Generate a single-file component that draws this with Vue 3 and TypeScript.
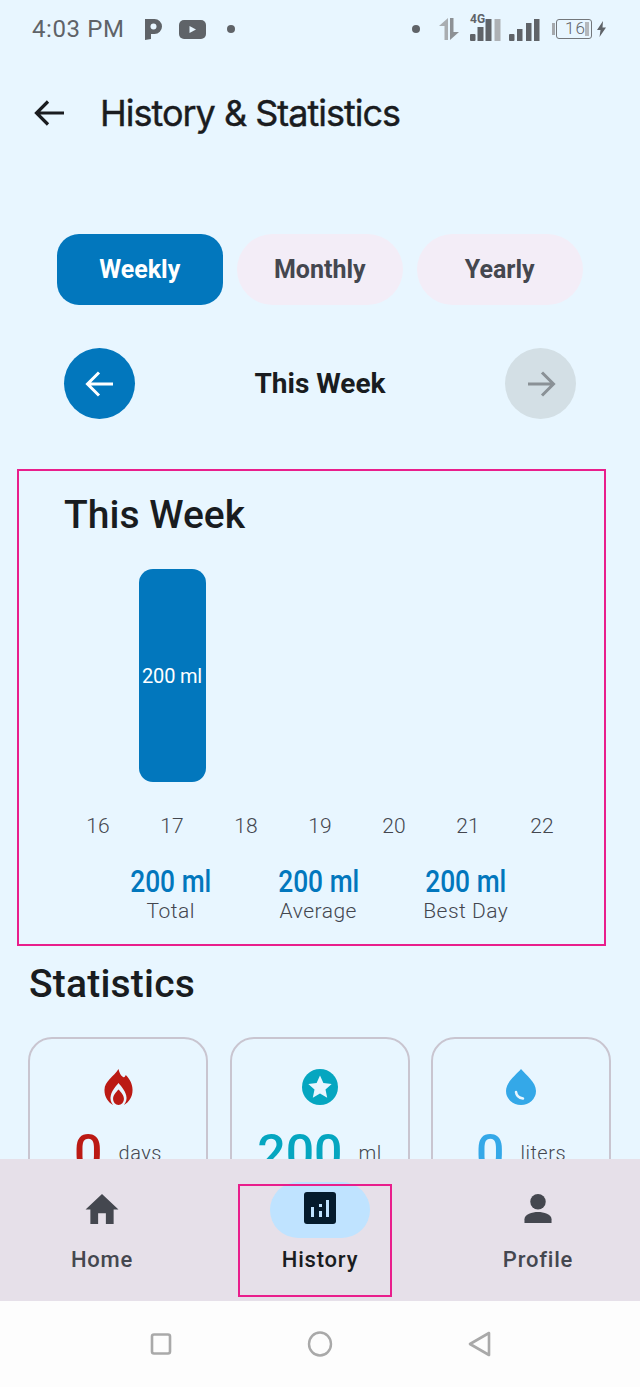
<script setup lang="ts">
const tabs = [
  { label: "Weekly", active: true },
  { label: "Monthly", active: false },
  { label: "Yearly", active: false },
];

const days = [16, 17, 18, 19, 20, 21, 22];

const summary = [
  { value: "200 ml", label: "Total" },
  { value: "200 ml", label: "Average" },
  { value: "200 ml", label: "Best Day" },
];
</script>

<template>
  <div class="phone">
    <div class="screen">
      <div class="status">
        <span class="time">4:03 PM</span>
        <svg class="st-p" width="17" height="21" viewBox="0 0 17 21">
          <path fill="#5f6368" d="M0 0h9.500a7.500 7.500 0 0 1 0 15H6v5l-6 1z" />
          <circle cx="8.500" cy="7.500" r="3" fill="#e8f6ff" />
        </svg>
        <svg class="st-yt" width="27" height="19" viewBox="0 0 27 19">
          <rect width="27" height="19" rx="5" fill="#5f6368" />
          <path fill="#e8f6ff" d="M10.500 6l6.500 3.500-6.500 3.500z" />
        </svg>
        <i class="dot st-dot"></i>
        <span class="grow"></span>
        <i class="dot"></i>
        <svg class="st-arrows" width="22" height="22" viewBox="0 0 22 22">
          <path fill="#a9adb1" d="M10 0v22H6.500V8H1z" />
          <path fill="#8d9195" d="M12 0h3.500v14H21l-9 8z" />
        </svg>
        <div class="st-net">
          <span class="net-4g">4G</span>
          <svg width="31" height="23" viewBox="0 0 31 23">
            <rect x="0" y="16" width="5.500" height="7" rx="1" fill="#5f6368" />
            <rect x="7.500" y="9" width="6" height="14" fill="#5f6368" />
            <rect x="15.500" y="1" width="6" height="22" fill="#5f6368" />
            <rect x="24.500" y="1" width="6" height="22" fill="#adb1b5" />
          </svg>
        </div>
        <svg class="st-bars" width="31" height="23" viewBox="0 0 31 23">
          <rect x="0" y="16" width="5.500" height="7" rx="1" fill="#5f6368" />
          <rect x="8" y="11" width="5.500" height="12" fill="#5f6368" />
          <rect x="17" y="5" width="5.500" height="18" fill="#5f6368" />
          <rect x="25" y="1" width="5.500" height="22" fill="#5f6368" />
        </svg>
        <div class="st-batt">
          <i class="batt-cap"></i>
          <div class="batt-body">16<i class="batt-fill"></i></div>
        </div>
        <svg class="st-bolt" width="9" height="16" viewBox="0 0 9 16">
          <path fill="#5f6368" d="M6 0L0 9h3.500L2.500 16 9 6.500H5.500z" />
        </svg>
      </div>

      <header class="topbar">
        <svg width="32" height="32" viewBox="0 0 32 32" fill="none" stroke="#1a1c20" stroke-width="3.200">
          <path d="M31 16H4M15 4.500L3.500 16 15 27.500" />
        </svg>
        <h1>History &amp; Statistics</h1>
      </header>

      <div class="tabs">
        <button v-for="t in tabs" :key="t.label" class="tab" :class="{ active: t.active }">{{ t.label }}</button>
      </div>

      <div class="period">
        <div class="round prev">
          <svg width="32" height="32" viewBox="0 0 32 32" fill="none" stroke="#fff" stroke-width="3">
            <path d="M29 16H4M15 4.500L3.500 16 15 27.500" />
          </svg>
        </div>
        <span class="period-label">This Week</span>
        <div class="round next">
          <svg width="32" height="32" viewBox="0 0 32 32" fill="none" stroke="#8a9196" stroke-width="3">
            <path d="M3 16H28M17 4.500L28.500 16 17 27.500" />
          </svg>
        </div>
      </div>

      <section class="chart-box">
        <h2>This Week</h2>
        <div class="bars">
          <div v-for="d in days" :key="d" class="bar-col">
            <div v-if="d === 17" class="bar">200 ml</div>
          </div>
        </div>
        <div class="days">
          <span v-for="d in days" :key="d">{{ d }}</span>
        </div>
        <div class="summary">
          <div v-for="s in summary" :key="s.label" class="sum-item">
            <strong>{{ s.value }}</strong>
            <span>{{ s.label }}</span>
          </div>
        </div>
      </section>

      <h2 class="stats-title">Statistics</h2>

      <div class="cards">
        <div class="card">
          <svg width="29" height="34" viewBox="0 0 32 36" preserveAspectRatio="none">
            <path fill="#bb1a14" d="M16 0c1 4 2.500 6.500 5 8 1.500.900 2.500-.500 3-2 4.500 4 7.500 9 7.500 15 0 7-4 12-9.500 15 2.500-3 3.500-6 2.500-9.500C23 21 19.500 18 16 14c-3.500 4-7 7-8.500 12.500-1 3.500 0 6.500 2.500 9.500C4.500 33 .500 28 .500 21 .500 12 11 7.500 16 0z" />
            <path fill="#bb1a14" d="M16 20.500c3 3 6 5.500 6 9.500a6 6 0 0 1-12 0c0-4 3-6.500 6-9.500z" />
          </svg>
          <div class="metric"><b class="red">0</b><span>days</span></div>
        </div>
        <div class="card">
          <svg width="36" height="36" viewBox="0 0 36 36">
            <circle cx="18" cy="18" r="18" fill="#05a6c0" />
            <path fill="#e8f6ff" d="M18 6.500l3.400 7.600 8.300.9-6.200 5.600 1.700 8.200L18 24.600l-7.200 4.200 1.700-8.200L6.300 15l8.300-.9z" />
          </svg>
          <div class="metric"><b class="teal">200</b><span>ml</span></div>
        </div>
        <div class="card">
          <svg width="30" height="36" viewBox="0 0 30 36">
            <path fill="#34a8e8" d="M15 0c5 6 15 13 15 22a15 14 0 0 1-30 0C0 13 10 6 15 0z" />
            <path fill="none" stroke="#e8f6ff" stroke-width="2.500" stroke-linecap="round" d="M10 23c.500 4 3 6 7 6.500" />
          </svg>
          <div class="metric"><b class="blue">0</b><span>liters</span></div>
        </div>
      </div>
    </div>

    <nav class="bottom-nav">
      <div class="nav-item">
        <div class="nav-icon">
          <svg width="34" height="31" viewBox="0 0 34 32">
            <path fill="#44474f" d="M17 1L34 17h-5v15h-8V21h-8v11H5V17H0z" />
          </svg>
        </div>
        <span>Home</span>
      </div>
      <div class="nav-item current">
        <div class="nav-icon pill">
          <svg width="32" height="32" viewBox="0 0 32 32">
            <rect width="32" height="32" rx="3" fill="#051b2c" />
            <path fill="#bfe3ff" d="M7 15h3v10H7zM15 12h3v3h-3zM15 19h3v6h-3zM22 8h3v17h-3z" />
          </svg>
        </div>
        <span>History</span>
      </div>
      <div class="nav-item">
        <div class="nav-icon">
          <svg width="30" height="29" viewBox="0 0 30 30">
            <ellipse cx="15" cy="8" rx="8" ry="8" fill="#44474f" />
            <path fill="#44474f" d="M1 30v-4c0-5 8-7.500 14-7.500S29 21 29 26v4z" />
          </svg>
        </div>
        <span>Profile</span>
      </div>
      <i class="highlight"></i>
    </nav>

    <div class="sys-nav">
      <svg width="24" height="24" viewBox="0 0 24 24" fill="none" stroke="#a9a9a9" stroke-width="2.600">
        <rect x="3" y="2.500" width="18" height="19" rx="2" />
      </svg>
      <svg width="26" height="26" viewBox="0 0 26 26" fill="none" stroke="#a9a9a9" stroke-width="2.400">
        <ellipse cx="13" cy="13" rx="11" ry="11.500" />
      </svg>
      <svg width="24" height="26" viewBox="0 0 24 26" fill="none" stroke="#a9a9a9" stroke-width="2.600" stroke-linejoin="round">
        <path d="M22 2L3 13l19 11z" />
      </svg>
    </div>
  </div>
</template>

<style>
html,
body {
  margin: 0;
  background: #e8f6ff;
}
</style>

<style scoped>
.phone {
  width: 640px;
  height: 1387px;
  display: flex;
  flex-direction: column;
  overflow: hidden;
  background: #e8f6ff;
  font-family: Roboto, "Liberation Sans", sans-serif;
}

.screen {
  height: 1159px;
  overflow: hidden;
  flex: none;
}

.status {
  height: 58px;
  display: flex;
  align-items: center;
  padding: 0 34px 0 32px;
  box-sizing: border-box;
  color: #5f6368;
}

.time {
  font-size: 24px;
  letter-spacing: 0.6px;
}

.grow {
  flex: 1;
}

.dot {
  width: 8px;
  height: 8px;
  border-radius: 50%;
  background: #5f6368;
}

.st-p {
  margin-left: 20px;
}

.st-yt {
  margin-left: 17px;
}

.st-dot {
  margin-left: 21px;
}

.st-arrows {
  margin-left: 18px;
}

.st-net {
  position: relative;
  margin-left: 10px;
  height: 23px;
}

.net-4g {
  position: absolute;
  left: 0;
  top: -6px;
  font-size: 12px;
  font-weight: 700;
  color: #5f6368;
}

.st-bars {
  margin-left: 8px;
}

.st-batt {
  display: flex;
  align-items: center;
  margin-left: 12px;
}

.batt-cap {
  width: 3px;
  height: 12px;
  background: #a5a9ad;
}

.batt-body {
  position: relative;
  width: 36px;
  height: 20px;
  margin-left: 1px;
  box-sizing: border-box;
  border: 1.500px solid #73777b;
  border-radius: 3px;
  padding-left: 8px;
  font-size: 17px;
  line-height: 17px;
  font-weight: 300;
  letter-spacing: 1px;
}

.batt-fill {
  position: absolute;
  right: 2px;
  top: 2px;
  bottom: 2px;
  width: 4px;
  background: #b4b8bc;
}

.st-bolt {
  margin-left: 5px;
}

.topbar {
  height: 110px;
  display: flex;
  align-items: center;
  padding-left: 33px;
  gap: 35px;
}

h1 {
  margin: 0;
  font-size: 36px;
  font-weight: 400;
  letter-spacing: -1px;
  color: #1a1c20;
  font-family: Inter, Roboto, sans-serif;
  -webkit-text-stroke: 0.4px #1a1c20;
}

.tabs {
  margin-top: 66px;
  padding-left: 57px;
  display: flex;
  gap: 14.500px;
}

.tab {
  width: 165.500px;
  height: 71px;
  border: none;
  border-radius: 36px;
  background: #f3edf7;
  color: #44474f;
  font: 700 25px Roboto, sans-serif;
  padding: 0;
}

.tab.active {
  background: #0277bd;
  color: #fff;
  border-radius: 22px;
}

.period {
  margin-top: 43px;
  padding: 0 64px;
  display: flex;
  align-items: center;
  justify-content: space-between;
}

.round {
  width: 71px;
  height: 71px;
  border-radius: 50%;
  display: flex;
  align-items: center;
  justify-content: center;
}

.prev {
  background: #0277bd;
}

.next {
  background: #d3dfe5;
}

.period-label {
  font-size: 28px;
  font-weight: 700;
  color: #191c20;
}

.chart-box {
  margin: 50px 0 0 17px;
  width: 589px;
  height: 477px;
  box-sizing: border-box;
  border: 2px solid #e91e8c;
  padding: 0 0 0 45px;
}

.chart-box h2 {
  margin: 20px 0 0;
  font-size: 39px;
  line-height: 48px;
  font-weight: 500;
  color: #191c20;
}

.bars {
  margin-top: 30px;
  width: 518px;
  margin-left: -3px;
  display: grid;
  grid-template-columns: repeat(7, 1fr);
  height: 213px;
}

.bar-col {
  display: flex;
  justify-content: center;
}

.bar {
  width: 67px;
  height: 213px;
  border-radius: 14px;
  background: #0277bd;
  color: #fff;
  font-size: 20px;
  letter-spacing: -0.2px;
  display: flex;
  align-items: center;
  justify-content: center;
}

.days {
  margin-top: 30px;
  width: 518px;
  margin-left: -3px;
  display: grid;
  grid-template-columns: repeat(7, 1fr);
  text-align: center;
  font-size: 21px;
  line-height: 28px;
  font-weight: 300;
  color: #44474f;
}

.summary {
  margin-top: 25px;
  margin-left: 33px;
  display: flex;
}

.sum-item {
  width: 147.500px;
  display: flex;
  flex-direction: column;
  align-items: center;
}

.sum-item strong {
  font-size: 31px;
  line-height: 33px;
  font-weight: 500;
  color: #0277bd;
  transform: scaleX(0.85);
}

.sum-item span {
  font-size: 21px;
  line-height: 26px;
  font-weight: 300;
  letter-spacing: 0.5px;
  color: #44474f;
}

.stats-title {
  margin: 15px 0 0 29px;
  font-size: 39px;
  line-height: 46px;
  font-weight: 500;
  letter-spacing: 0.2px;
  color: #191c20;
}

.cards {
  margin: 30px 0 0 28px;
  display: flex;
  gap: 21.500px;
}

.card {
  flex: none;
  width: 180px;
  height: 220px;
  box-sizing: border-box;
  border: 2px solid #c9c5d0;
  border-radius: 24px;
  display: flex;
  flex-direction: column;
  align-items: center;
  padding-top: 30px;
}

.card svg {
  display: block;
  height: 36px;
}

.metric {
  margin-top: 16px;
  display: flex;
  align-items: center;
  gap: 16px;
}

.metric b {
  font-size: 50px;
  line-height: 64px;
  font-weight: 500;
}

.metric span {
  font-size: 20px;
  font-weight: 300;
  letter-spacing: 0.5px;
  color: #44474f;
}

.red {
  color: #bb1a14;
}

.teal {
  color: #05a6c0;
}

.blue {
  color: #34a8e8;
}

.bottom-nav {
  position: relative;
  flex: none;
  height: 142px;
  box-sizing: border-box;
  padding: 23px 25px 0;
  background: #e6e0e9;
  display: flex;
  gap: 64px;
}

.nav-item {
  width: 154px;
  display: flex;
  flex-direction: column;
  align-items: center;
  color: #44474f;
  font-size: 22px;
  font-weight: 500;
  letter-spacing: 0.8px;
}

.nav-item.current {
  color: #191c20;
}

.nav-icon {
  width: 100px;
  height: 56px;
  box-sizing: border-box;
  padding-bottom: 4px;
  display: flex;
  align-items: center;
  justify-content: center;
  margin-bottom: 9px;
}

.pill {
  background: #bfe3ff;
  border-radius: 28px;
}

.highlight {
  position: absolute;
  left: 238px;
  top: 25px;
  width: 154px;
  height: 113px;
  box-sizing: border-box;
  border: 2px solid #e91e8c;
}

.sys-nav {
  flex: 1;
  background: #fdfdfd;
  display: flex;
  align-items: center;
  justify-content: center;
  gap: 134px;
}
</style>
